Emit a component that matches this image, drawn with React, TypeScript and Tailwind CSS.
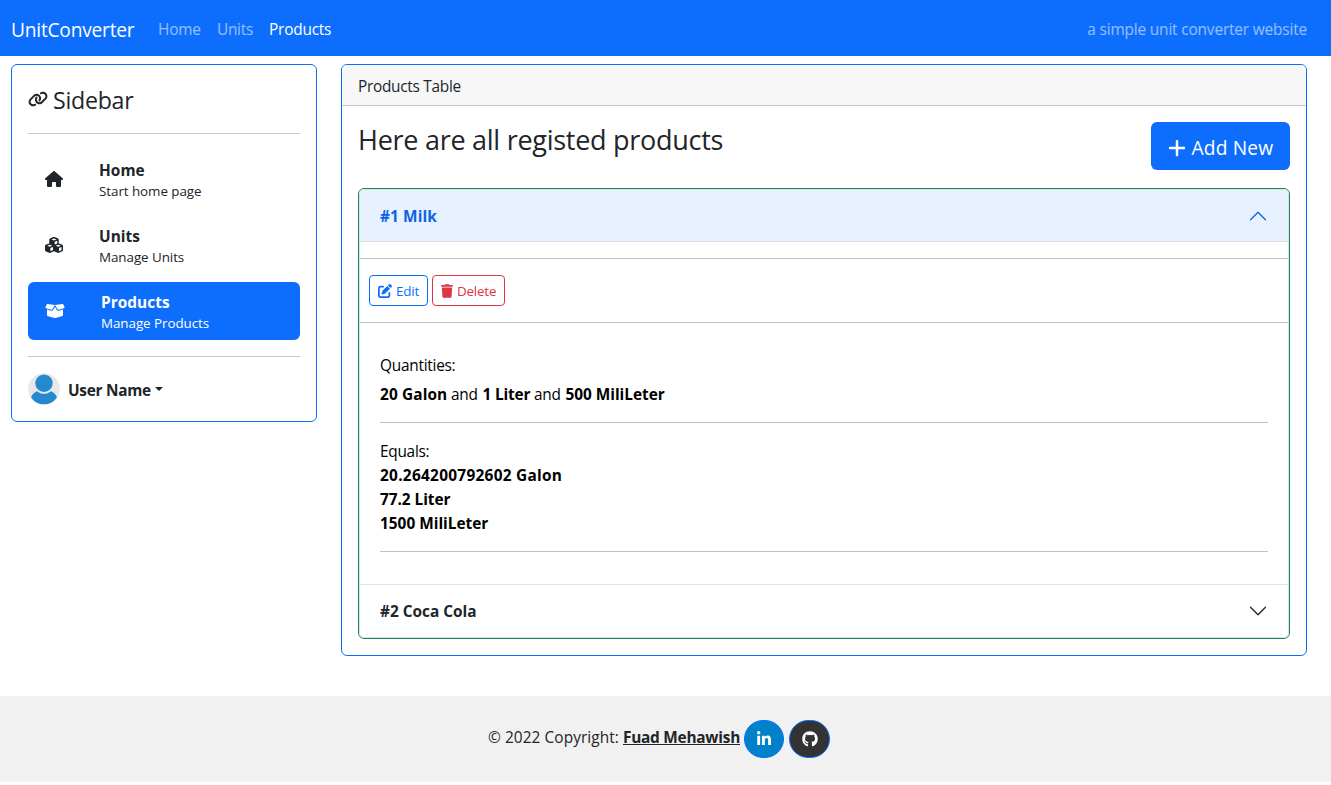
import type { ReactNode } from "react";
import {
  FaBoxOpen,
  FaCubes,
  FaGithub,
  FaHouse,
  FaLink,
  FaLinkedinIn,
  FaPenToSquare,
  FaPlus,
  FaTrash,
} from "react-icons/fa6";

function NavItem({ icon, title, note, active }: { icon: ReactNode; title: string; note: string; active?: boolean }) {
  return (
    <a
      href="#"
      className={
        active
          ? "flex h-[58px] items-center rounded-md bg-[#0d6efd] pl-[17px] text-white"
          : "flex h-[58px] items-center pl-[17px] text-[#212529]"
      }
    >
      <span className={active ? "flex w-14 items-center" : "flex w-[54px] items-center"}>{icon}</span>
      <span className="flex flex-col pt-1">
        <span className="text-[15.4px] leading-[21px] font-bold tracking-[0.05px]">{title}</span>
        <span className="text-[13.4px] leading-[21px] tracking-[-0.06px]">{note}</span>
      </span>
    </a>
  );
}

function Chevron({ up }: { up?: boolean }) {
  return (
    <svg viewBox="0 0 16 16" className={up ? "mb-0.5 size-5 rotate-180 text-[#0c63e4]" : "mb-0.5 size-5 text-[#212529]"} fill="currentColor">
      <path
        fillRule="evenodd"
        d="M1.646 4.646a.5.5 0 0 1 .708 0L8 10.293l5.646-5.647a.5.5 0 0 1 .708.708l-6 6a.5.5 0 0 1-.708 0l-6-6a.5.5 0 0 1 0-.708z"
      />
    </svg>
  );
}

function Avatar() {
  return (
    <svg viewBox="0 0 32 32" className="size-8">
      <defs>
        <clipPath id="face">
          <circle cx="16" cy="16" r="15.6" />
        </clipPath>
      </defs>
      <circle cx="16" cy="16" r="15.8" fill="#e6e7e8" />
      <circle cx="16" cy="10.2" r="8.7" fill="#2489ce" />
      <path
        clipPath="url(#face)"
        fill="#2489ce"
        d="M3 24.5C4.200 21.500 6.500 19.200 9 18.300C13 21.700 19 21.700 23 18.300C25.500 19.200 27.800 21.500 29 24.500C26 29 21.500 31.600 16 31.600C10.500 31.600 6 29 3 24.500Z"
      />
    </svg>
  );
}

export default function App() {
  return (
    <div className="h-[785px] w-[1331px] bg-white font-['Open_Sans',sans-serif] text-[15.4px] leading-6 whitespace-nowrap text-[#212529]">
      <nav className="flex h-14 items-center bg-[#0d6efd] pt-[3px] pr-6 pl-[11px] text-white">
        <a href="#" className="w-[147px] text-[19.2px] tracking-[-0.24px]">UnitConverter</a>
        <div className="flex gap-4 pt-px text-white/55">
          <a href="#" className="w-[43px] tracking-[-0.2px]">Home</a>
          <a href="#" className="w-9 tracking-[-0.27px]">Units</a>
          <a href="#" className="tracking-[-0.2px] text-white">Products</a>
        </div>
        <span className="ml-auto pt-px tracking-[-0.16px] text-white/55">a simple unit converter website</span>
      </nav>

      <div className="flex items-start gap-6 pt-2 pl-[11px]">
        <aside className="h-[358px] w-[306px] rounded-md border border-[#0d6efd] px-4">
          <h2 className="flex h-[68px] items-center gap-[5px] pt-0.5 text-[23.2px] tracking-[-0.27px]">
            <FaLink className="-mt-0.5 h-4 w-5" />
            Sidebar
          </h2>
          <hr className="border-[#c8c9ca]" />
          <div className="flex flex-col gap-2 py-4">
            <NavItem icon={<FaHouse className="h-4 w-[18px]" />} title="Home" note="Start home page" />
            <NavItem icon={<FaCubes className="h-4 w-[18px]" />} title="Units" note="Manage Units" />
            <NavItem icon={<FaBoxOpen className="h-4 w-5" />} title="Products" note="Manage Products" active />
          </div>
          <hr className="border-[#c8c9ca]" />
          <div className="flex items-center pt-4">
            <Avatar />
            <strong className="ml-2 w-[87px] pt-[3px] tracking-[-0.27px]">User Name</strong>
            <span className="border-x-4 border-t-4 border-x-transparent border-t-[#212529]" />
          </div>
        </aside>

        <main className="w-[966px] rounded-md border border-[#0d6efd]">
          <header className="flex h-[41px] items-center rounded-t-[5px] border-b border-[#c8c8c8] bg-[#f7f7f7] px-4 pt-[3px] tracking-[-0.28px]">
            Products Table
          </header>
          <div className="p-4">
            <div className="flex items-start justify-between">
              <h1 className="text-[27px] leading-9 tracking-[-0.27px]">Here are all registed products</h1>
              <button className="flex h-12 w-[139px] items-center rounded-md bg-[#0d6efd] pt-[3px] pl-[17px] text-[19.2px] tracking-[0.14px] text-white">
                <FaPlus className="mr-[5.500px] h-5 w-[18px]" />
                Add New
              </button>
            </div>

            <div className="mt-[18px] rounded-md border border-[#198754]">
              <div className="rounded-[5px] border border-[#dfe2e5]">
                <section>
                  <div className="flex h-[52px] items-center justify-between rounded-t bg-[#e7f1ff] px-5 pt-px font-bold text-[#0c63e4] shadow-[inset_0_-1px_0_#dbdfe6]">
                    <span className="tracking-[0.1px]">#1 Milk</span>
                    <Chevron up />
                  </div>
                  <hr className="mt-4 border-[#bfbfbf]" />
                  <div className="flex h-[63px] items-center gap-1 px-[9px] text-[13.4px]">
                    <button className="flex h-[31px] w-[59px] items-center gap-1 rounded border border-[#0d6efd] pt-px pl-2 text-[#0d6efd]">
                      <FaPenToSquare className="size-3.5" />
                      <span className="tracking-[-0.2px]">Edit</span>
                    </button>
                    <button className="flex h-[31px] w-[73px] items-center gap-1 rounded border border-[#dc3545] pt-px pl-2 text-[#dc3545]">
                      <FaTrash className="h-3.5 w-3" />
                      <span className="tracking-[-0.2px]">Delete</span>
                    </button>
                  </div>
                  <hr className="border-[#bfbfbf]" />
                  <div className="px-5 pt-[31px] pb-8 text-black">
                    <p className="mb-[5px] tracking-[-0.25px]">Quantities:</p>
                    <p className="flex">
                      <b className="w-[71px] tracking-[0.12px]">20 Galon</b>
                      <span className="w-[31.500px] tracking-[-0.2px]">and</span>
                      <b className="w-[51.500px] tracking-[-0.18px]">1 Liter</b>
                      <span className="w-[31.500px] tracking-[-0.2px]">and</span>
                      <b className="tracking-[-0.03px]">500 MiliLeter</b>
                    </p>
                    <hr className="mt-[15px] mb-[17px] border-[#bfbfbf]" />
                    <p className="tracking-[-0.27px]">Equals:</p>
                    <p className="font-bold tracking-[0.28px]">20.264200792602 Galon</p>
                    <p className="font-bold tracking-[-0.05px]">77.2 Liter</p>
                    <p className="font-bold">1500 MiliLeter</p>
                    <hr className="mt-[15px] border-[#bfbfbf]" />
                  </div>
                </section>
                <section className="flex h-[53px] items-center justify-between border-t border-[#dfe2e5] px-5 pt-px font-bold">
                  #2 Coca Cola
                  <Chevron />
                </section>
              </div>
            </div>
          </div>
        </main>
      </div>

      <footer className="mt-10 flex h-[86px] items-center bg-[#f1f1f1] pl-[488px]">
        <span className="w-[135px] pb-0.5 tracking-[0.08px]">© 2022 Copyright:</span>
        <a href="#" className="w-[121px] pb-0.5 font-bold tracking-[-0.25px] underline">Fuad Mehawish</a>
        <a href="#" className="mr-[5px] flex h-[38px] w-10 items-center justify-center rounded-full border border-[#0d6efd] bg-[#0082ca] text-white">
          <FaLinkedinIn className="size-4" />
        </a>
        <a href="#" className="flex h-[38px] w-[41px] items-center justify-center rounded-full border border-[#0d6efd] bg-[#333333] text-white">
          <FaGithub className="size-4" />
        </a>
      </footer>
    </div>
  );
}
